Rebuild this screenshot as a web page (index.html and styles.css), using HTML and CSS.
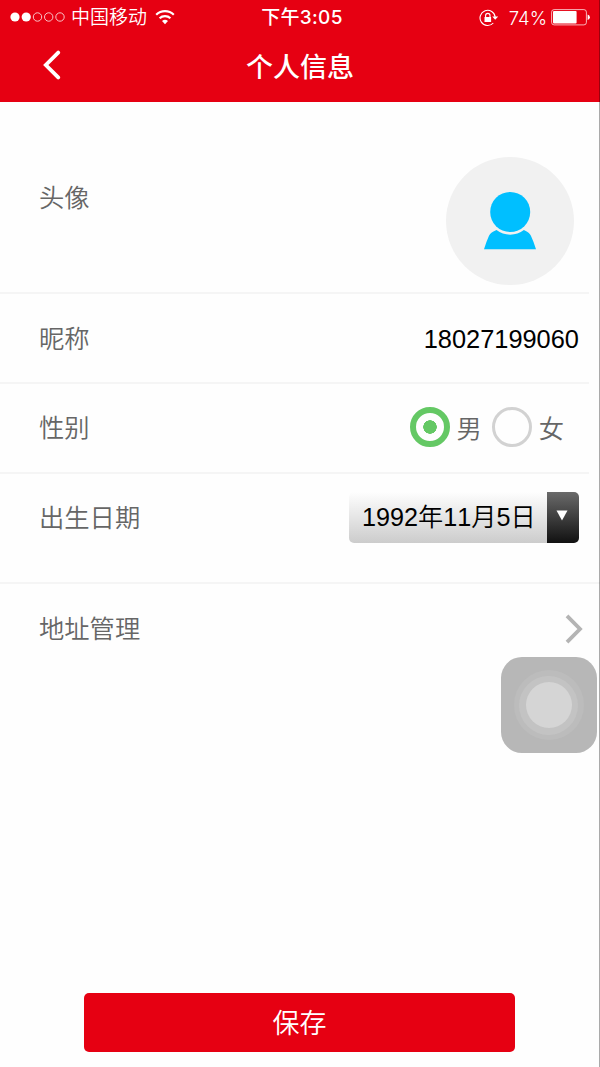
FILE: index.html
```html
<!DOCTYPE html>
<html lang="zh-CN">
<head>
    <meta charset="UTF-8">
    <meta name="viewport" content="width=device-width, initial-scale=1.0">
    <title>个人信息</title>
    <link rel="stylesheet" href="styles.css">
</head>
<body>
<div class="page">
    <header class="header">
        <div class="status-bar">
            <div class="status-left">
                <svg class="signal" width="55" height="12" viewBox="0 0 55 12">
                    <g fill="#fff">
                        <circle cx="5" cy="6" r="4.6"/>
                        <circle cx="16.2" cy="6" r="4.6"/>
                    </g>
                    <g fill="none" stroke="#fff" stroke-width="0.9" opacity="0.85">
                        <circle cx="27.5" cy="6" r="4.2"/>
                        <circle cx="38.7" cy="6" r="4.2"/>
                        <circle cx="50" cy="6" r="4.2"/>
                    </g>
                </svg>
                <span class="carrier">中国移动</span>
                <svg class="wifi" width="20" height="16" viewBox="0 0 20 16">
                    <g fill="none" stroke="#fff" stroke-width="2.2">
                        <path d="M1.2 5.8a12.6 12.6 0 0 1 17.6 0"/>
                        <path d="M4.6 9.2a7.8 7.8 0 0 1 10.8 0"/>
                    </g>
                    <path d="M10 15.2l-3-3.1a4.3 4.3 0 0 1 6 0z" fill="#fff"/>
                </svg>
            </div>
            <span class="time">下午3:05</span>
            <div class="status-right">
                <svg class="lock" width="20" height="18" viewBox="0 0 20 18">
                    <path d="M16.2 8.2A7.6 7.6 0 1 0 14.3 14" fill="none" stroke="#fff" stroke-width="1.1"/>
                    <path d="M13.2 7.6h6l-3 3.2z" fill="#fff"/>
                    <rect x="5.5" y="8" width="6.6" height="5" fill="#fff"/>
                    <path d="M6.6 8.4V6.6a2.2 2.2 0 0 1 4.4 0v1.8" fill="none" stroke="#fff" stroke-width="1.1"/>
                </svg>
                <span class="percent">74%</span>
                <svg class="battery" width="40" height="17" viewBox="0 0 40 17">
                    <rect x="0.6" y="0.6" width="34.8" height="15.3" rx="2.5" fill="none" stroke="#fff" stroke-opacity="0.7"/>
                    <rect x="2" y="2" width="23.6" height="12.5" rx="1" fill="#fff"/>
                    <path d="M36.6 5.5a2.8 2.8 0 0 1 0 5.5z" fill="#fff"/>
                </svg>
            </div>
        </div>
        <div class="nav-bar">
            <a class="back" href="#">
                <svg width="18" height="30" viewBox="0 0 18 30">
                    <path d="M15.2 2.6L2.8 15l12.4 12.4" fill="none" stroke="#fff" stroke-width="3.8" stroke-linecap="round"/>
                </svg>
            </a>
            <h1 class="title">个人信息</h1>
        </div>
    </header>

    <main class="list">
        <div class="row row-avatar">
            <span class="label">头像</span>
            <div class="avatar">
                <svg width="54" height="60" viewBox="0 0 54 60" fill="#00bfff">
                    <circle cx="27.2" cy="21" r="20"/>
                    <path d="M13.5 39a22.5 22.5 0 0 0 27.4 0q5.2 2.2 7 5.8q2.8 6 5.1 13.4H1q2.3-7.4 5-13.4q1.8-3.6 7.5-5.8z"/>
                </svg>
            </div>
        </div>
        <div class="row row-name">
            <span class="label">昵称</span>
            <span class="value">18027199060</span>
        </div>
        <div class="row">
            <span class="label">性别</span>
            <div class="gender">
                <span class="radio checked"></span>
                <span class="option">男</span>
                <span class="radio"></span>
                <span class="option">女</span>
            </div>
        </div>
        <div class="row row-birth">
            <span class="label">出生日期</span>
            <div class="select">
                <span class="date">1992年11月5日</span>
                <span class="arrow">
                    <svg width="12" height="11" viewBox="0 0 12 11"><path d="M0.5 0.5h11l-5.5 10z" fill="#fff"/></svg>
                </span>
            </div>
        </div>
        <a class="row row-address" href="#">
            <span class="label">地址管理</span>
            <svg class="more" width="18" height="30" viewBox="0 0 18 30">
                <path d="M2 1.8L15 15L2 28.2" fill="none" stroke="#b4b4b4" stroke-width="3.8"/>
            </svg>
        </a>
    </main>

    <button class="save">保存</button>

    <!-- floating assistive button -->
    <div class="assist"><i class="ring"><i class="ring ring-mid"><i class="ring ring-in"></i></i></i></div>
    <div class="edge"></div>
</div>
</body>
</html>
```

FILE: styles.css
```css
* {
    box-sizing: border-box;
}

body {
    margin: 0;
    background-color: #fefefe;
    font-family: "Liberation Sans", "Noto Sans CJK SC", sans-serif;
    font-weight: 350;
}

.page {
    position: relative;
    display: flex;
    flex-direction: column;
    height: 1067px;
    overflow: hidden;
}

.header {
    height: 102px;
    background-color: #e60012;
    color: #fff;
}

.status-bar {
    display: grid;
    grid-template-columns: 1fr auto 1fr;
    align-items: center;
    height: 34px;
    padding: 0 9px 0 10px;
    font-size: 19px;
    line-height: 32px;
}

.status-left,
.status-right {
    display: flex;
    align-items: center;
}

.status-left {
    padding-bottom: 1px;
}

.status-right {
    justify-content: flex-end;
}

.carrier {
    margin: 0 8px 0 6px;
    padding-top: 2px;
}

.time {
    padding-left: 3px;
    font-family: Inter, "Noto Sans CJK SC", sans-serif;
    font-size: 19px;
    font-weight: 500;
    letter-spacing: 0.3px;
}

.percent {
    margin: 0 4px 0 10px;
    font-family: Inter, sans-serif;
    font-size: 18.5px;
}

.nav-bar {
    display: flex;
    align-items: center;
    height: 62px;
    padding-left: 43px;
}

.back {
    display: flex;
    width: 18px;
}

.title {
    flex: 1;
    margin: 0 61px 0 0;
    font-size: 27px;
    font-weight: 500;
    text-align: center;
}

.row {
    display: flex;
    align-items: center;
    justify-content: space-between;
    height: 90px;
    margin-right: 11px;
    padding: 0 10px 0 39px;
    border-bottom: 2px solid #f5f5f5;
    color: #666;
    text-decoration: none;
}

.label {
    font-size: 25.3px;
    line-height: 38px;
}

.row-avatar {
    align-items: flex-start;
    height: 192px;
    padding: 55px 15px 0 39px;
}

.row-avatar .label {
    margin-top: 22px;
}

.avatar {
    display: flex;
    align-items: center;
    justify-content: center;
    width: 128px;
    height: 128px;
    border-radius: 50%;
    background-color: #f1f1f1;
}

.row-name {
    padding-top: 2px;
}

.value {
    font-size: 25.4px;
    color: #000;
}

.gender {
    display: flex;
    align-items: center;
    padding: 0 15px 2px 0;
    font-size: 25.3px;
}

.radio {
    width: 40px;
    height: 40px;
    border: 3px solid #d2d2d2;
    border-radius: 50%;
}

.radio.checked {
    margin-right: -1px;
    border: 6px solid #64c864;
    background: radial-gradient(circle, #64c864 6.5px, transparent 7px);
}

.option {
    margin: 0 10px 0 7px;
}

.option:last-child {
    margin-right: 0;
}

.row-birth {
    align-items: flex-start;
    height: 110px;
    margin-right: 0;
    padding: 18px 21px 0 39px;
}

.row-birth .label {
    margin-top: 7px;
}

.select {
    display: flex;
    height: 51px;
    border-radius: 5px;
    overflow: hidden;
}

.date {
    width: 198px;
    padding-left: 13px;
    background: linear-gradient(#fefefe, #ccc);
    font-size: 25.2px;
    line-height: 51px;
    color: #000;
    white-space: nowrap;
    font-kerning: none;
}

.arrow {
    display: flex;
    justify-content: center;
    width: 32px;
    padding: 18px 3px 0 0;
    background: linear-gradient(#6a6a6a, #111);
}

.row-address {
    margin-right: 0;
    padding-right: 17px;
    border-bottom: 0;
}

.save {
    width: 431px;
    height: 59px;
    margin: auto 0 15px 84px;
    padding: 0 0 2px;
    border: 0;
    border-radius: 5px;
    background-color: #e60012;
    color: #fff;
    font-family: inherit;
    font-size: 27px;
    font-weight: 350;
}

.assist {
    position: absolute;
    top: 657px;
    left: 500.5px;
    display: flex;
    align-items: center;
    justify-content: center;
    width: 96px;
    height: 96px;
    border-radius: 21px;
    background-color: #b7b7b7;
}

.ring {
    display: flex;
    align-items: center;
    justify-content: center;
    width: 70px;
    height: 70px;
    border-radius: 50%;
    background-color: #bcbcbc;
}

.ring-mid {
    width: 59px;
    height: 59px;
    background-color: #c3c3c3;
}

.ring-in {
    width: 46px;
    height: 46px;
    background-color: #d5d5d5;
}

.edge {
    position: absolute;
    top: 0;
    right: 0;
    width: 1px;
    height: 100%;
    background-color: rgba(0, 0, 0, 0.33);
}
```
